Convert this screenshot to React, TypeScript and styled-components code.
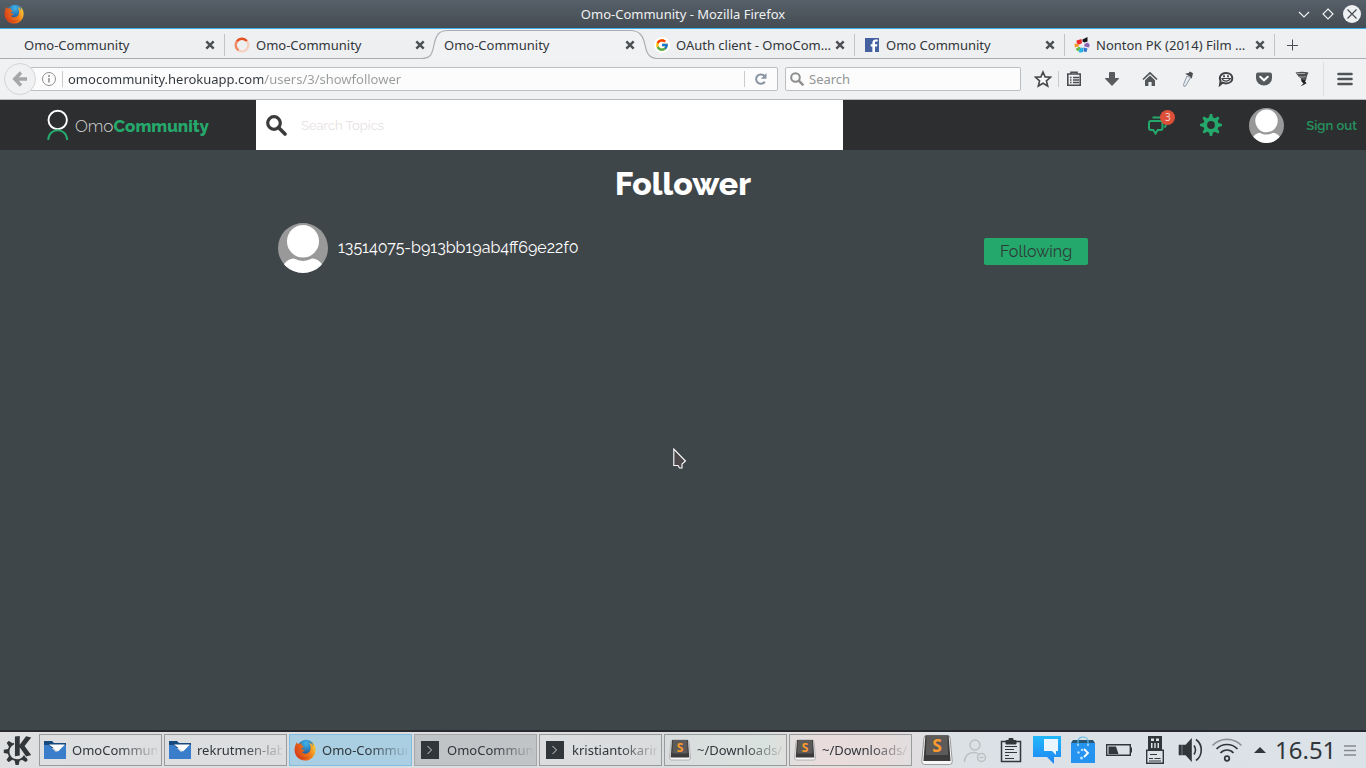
import React from "react";
import styled, { createGlobalStyle, css } from "styled-components";
import { FcGoogle } from "react-icons/fc";
import { SiKde } from "react-icons/si";

const chromeFont = `"Noto Sans", "Open Sans", sans-serif`;
const siteFont = `Raleway, Lato, sans-serif`;
const green = "#25a86b";

const GlobalStyle = createGlobalStyle`
  *, *::before, *::after { box-sizing: border-box; }
  body { margin: 0; background: #3f4649; font-family: ${chromeFont}; font-size: 13px; color: #31363b; }
  button { font: inherit; color: inherit; padding: 0; border: 0; background: none; cursor: pointer; }
  input { font: inherit; color: inherit; padding: 0; border: 0; background: none; outline: 0; min-width: 0; }
  a { text-decoration: none; color: inherit; }
  svg { display: block; flex: none; }
`;

const Desktop = styled.div`
  display: flex;
  flex-direction: column;
  min-height: 100vh;
`;

/* ---------- window title ---------- */
const TitleBar = styled.header`
  display: grid;
  grid-template-columns: 1fr auto 1fr;
  align-items: center;
  height: 29px;
  padding: 0 4px;
  color: #eff0f1;
  background: linear-gradient(#566068, #454c53);
  border-bottom: 1px solid #3daee9;
`;
const WindowControls = styled.div`
  display: flex;
  justify-content: flex-end;
  gap: 4px;
`;
const WindowButton = styled.button`
  display: grid;
  place-items: center;
  width: 20px;
  height: 20px;
`;

/* ---------- tabs ---------- */
const TabStrip = styled.nav`
  display: flex;
  height: 30px;
  padding-left: 14px;
  background: linear-gradient(#eff0f1, #eeeff1);
  border-bottom: 1px solid #a9adb1;
`;
const Tab = styled.div<{ $divider?: boolean }>`
  position: relative;
  display: flex;
  align-items: center;
  gap: 6px;
  flex: 0 1 210px;
  min-width: 0;
  height: 30px;
  padding: 1px 9px 0 10px;
  ${(p) =>
    p.$divider &&
    css`
      &::after {
        content: "";
        position: absolute;
        right: -1px;
        top: 5px;
        width: 1px;
        height: 22px;
        background: #c2c5c8;
      }
    `}
`;
const TabOutline = styled.svg`
  position: absolute;
  left: -12px;
  top: 0;
`;
const TabLink = styled.a`
  position: relative;
  flex: 1;
  overflow: hidden;
  white-space: nowrap;
  text-overflow: ellipsis;
  line-height: 20px;
`;
const TabClose = styled.button`
  position: relative;
  display: grid;
  place-items: center;
  width: 10px;
  height: 16px;
  margin-left: -4px;
`;
const NewTab = styled.button`
  display: grid;
  place-items: center;
  width: 36px;
  padding-top: 3px;
`;

/* ---------- navigation bar ---------- */
const NavBar = styled.div`
  display: flex;
  align-items: center;
  height: 41px;
  padding-left: 4px;
  background: #f0f1f3;
  border-bottom: 1px solid #b9bcbf;
`;
const BackButton = styled.button`
  position: relative;
  display: grid;
  place-items: center;
  flex: none;
  width: 32px;
  height: 32px;
  margin-right: -6px;
  border: 1px solid #d3d5d7;
  border-radius: 50%;
  background: #f0f1f3;
`;
const Field = styled.div<{ $search?: boolean }>`
  display: flex;
  align-items: center;
  flex: ${(p) => (p.$search ? "0 1 236px" : "1 1 0")};
  min-width: 0;
  height: 24px;
  border: 1px solid #bcbfc2;
  border-radius: 2px;
  background: #fcfcfc;
  gap: 5px;
  ${(p) =>
    p.$search
      ? css`
          margin-left: 7px;
          padding-left: 4px;
        `
      : css`
          padding-left: 10px;
        `}
`;
const AddressInput = styled.input`
  flex: 1;
  height: 20px;
  color: transparent;
  background: linear-gradient(to right, #31363b 195px, #989b9d 195px);
  background-clip: text;
  -webkit-background-clip: text;
`;
const SearchInput = styled.input`
  flex: 1;
  height: 20px;
  &::placeholder { color: #939597; opacity: 1; }
`;
const Rule = styled.span<{ $tall?: boolean }>`
  flex: none;
  width: 1px;
  height: ${(p) => (p.$tall ? 34 : 16)}px;
  margin-left: ${(p) => (p.$tall ? 2 : 0)}px;
  background: ${(p) => (p.$tall ? "#dcdee0" : "#c9cccf")};
`;
const ReloadButton = styled.button`
  display: grid;
  place-items: center;
  width: 27px;
  height: 20px;
  padding-right: 5px;
`;
const Tools = styled.div`
  display: flex;
  align-items: center;
  padding-left: 6px;
`;
const ToolButton = styled.button<{ $width?: number }>`
  display: grid;
  place-items: center;
  width: ${(p) => p.$width ?? 38}px;
  height: 30px;
`;
const ListButton = styled(ToolButton)`
  width: 34px;
  padding-right: 4px;
`;

/* ---------- site ---------- */
const SiteHeader = styled.header`
  display: flex;
  height: 50px;
  background: #2d2e30;
  font-family: ${siteFont};
`;
const Brand = styled.a`
  display: flex;
  align-items: center;
  gap: 6px;
  width: 256px;
  padding-left: 47px;
  color: #d4d4d4;
  font-size: 17px;
  line-height: 24px;
`;
const BrandName = styled.span`
  font-weight: 300;
  padding-top: 2px;
  b { font-weight: 800; color: ${green}; }
`;
const TopicSearch = styled.label`
  display: flex;
  align-items: center;
  gap: 14px;
  flex: 0 1 43%;
  padding-left: 10px;
  background: #fff;
`;
const TopicInput = styled.input`
  flex: 1;
  height: 30px;
  color: #3b3b3b;
  &::placeholder { color: #e6dfe1; opacity: 1; }
`;
const Account = styled.div`
  display: flex;
  align-items: center;
  justify-content: flex-end;
  flex: 1;
  padding-right: 9px;
`;
const IconLink = styled.a`
  position: relative;
  margin-right: 32px;
`;
const Badge = styled.span`
  position: absolute;
  right: -7px;
  top: -5px;
  width: 15px;
  height: 15px;
  border-radius: 50%;
  background: #dd4f39;
  color: #f3d5cf;
  font-family: ${chromeFont};
  font-size: 10px;
  line-height: 15px;
  text-align: center;
`;
const AvatarLink = styled.a`
  margin: 0 22px 0 -5px;
`;
const SignOut = styled.a`
  padding-top: 2px;
  color: #25935f;
  font-size: 13px;
  font-weight: 600;
  line-height: 20px;
`;
const Page = styled.main`
  flex: 1;
  width: 100%;
  max-width: 810px;
  margin: 0 auto;
  color: #fff;
  font-family: ${siteFont};
  font-size: 16px;
`;
const PageTitle = styled.h1`
  margin: 14px 0 19px;
  font-size: 32px;
  font-weight: 800;
  line-height: 40px;
  text-align: center;
`;
const FollowerRow = styled.article`
  display: flex;
  align-items: center;
  gap: 10px;
`;
const FollowerName = styled.a`
  flex: 1;
  line-height: 20px;
`;
const FollowButton = styled.button`
  width: 104px;
  height: 27px;
  margin-top: 7px;
  border-radius: 2px;
  background: ${green};
  color: #2d3b38;
`;
const Pointer = styled.svg`
  position: absolute;
  left: 673px;
  top: 448px;
  pointer-events: none;
`;

/* ---------- desktop panel ---------- */
const Panel = styled.footer`
  display: flex;
  align-items: center;
  height: 38px;
  padding-left: 3px;
  border-top: 2px solid #292a30;
  background: linear-gradient(to right, #dedfe0 0%, #dadcdd 48%, #d9e2df 56%, #e9dcdc 60%, #e6dcdc 65%, #dbe1e5 69%, #dce3e8 100%);
`;
const Launcher = styled.button`
  width: 30px;
  margin-right: 6px;
`;
const TaskList = styled.div`
  display: flex;
  gap: 2px;
  flex: 0 1 873px;
  min-width: 0;
`;
const Task = styled.button<{ $tone?: "active" | "dim" }>`
  display: flex;
  align-items: center;
  gap: 6px;
  flex: 1 1 0;
  min-width: 0;
  height: 32px;
  padding: 0 4px;
  border: 1px solid ${(p) => (p.$tone === "active" ? "#80bde0" : p.$tone === "dim" ? "#a5a8aa" : "#999c9e")};
  background: ${(p) => (p.$tone === "active" ? "#aacfe3" : p.$tone === "dim" ? "#c1c4c6" : "transparent")};
  text-align: left;
`;
const TaskLabel = styled.span`
  flex: 1;
  overflow: hidden;
  white-space: nowrap;
  line-height: 20px;
  mask-image: linear-gradient(to right, #000 55%, transparent 105%);
`;
const Tray = styled.div`
  display: flex;
  align-items: center;
  flex: 1;
  justify-content: flex-end;
`;
const TrayButton = styled.button<{ $width?: number }>`
  display: grid;
  place-items: center;
  width: ${(p) => p.$width ?? 36}px;
  height: 36px;
`;
const Clock = styled.time`
  font-size: 24px;
  line-height: 34px;
  width: 59px;
  text-align: center;
`;

/* ---------- drawings ---------- */
const Firefox = ({ size = 20 }: { size?: number }) => (
  <svg width={size} height={size} viewBox="0 0 20 20">
    <defs>
      <radialGradient id="ffGlobe" cx="50%" cy="20%" r="80%">
        <stop offset="0" stopColor="#3fb5ea" />
        <stop offset="1" stopColor="#123a80" />
      </radialGradient>
      <linearGradient id="ffFox" x1="0" y1="0.6" x2="1" y2="0.2">
        <stop offset="0" stopColor="#d9401b" />
        <stop offset="0.6" stopColor="#ee7a1a" />
        <stop offset="1" stopColor="#fbd33a" />
      </linearGradient>
    </defs>
    <circle cx="11" cy="9" r="8.3" fill="url(#ffGlobe)" />
    <path d="M2.5 3 C3 4 3.3 4.4 4.2 4.6 C5.4 4 6.5 4.2 7 4.4 C6.4 5.2 6.6 6 8.8 6.8 C8.8 7.8 7.3 8 6.6 8.8 C7 9.8 8.5 9.6 9.9 10 C9.4 11.6 7.4 11.4 7 11.7 C8.4 14 13 14 14.6 10.6 C15.5 8.4 15 5.4 13.8 3 C16.4 4.4 17 6 17.2 7 C17.4 5 16.8 3.3 15.6 2 C18.6 4 19.8 7.2 19.6 10.4 C19.2 15.8 15 19.6 10 19.6 C4.6 19.6 .5 15.3 .5 10 C.5 7.6 1.3 5 2.5 3Z" fill="url(#ffFox)" />
    <path d="M2 12 C4 17 10 18.2 14.6 15.6 C11 19.4 4 18.6 2 12Z" fill="#c5321a" opacity=".55" />
  </svg>
);
const Cross = () => (
  <svg width="10" height="10" viewBox="0 0 10 10" stroke="#4c5054" strokeWidth="2.4">
    <path d="M1.3 1.3 L8.7 8.7 M8.7 1.3 L1.3 8.7" />
  </svg>
);
const Spinner = () => (
  <svg width="16" height="16" viewBox="0 0 16 16" fill="none" strokeWidth="2.4">
    <circle cx="8" cy="8" r="6.4" stroke="#f7cfc0" />
    <path d="M3 4.200 A6.4 6.4 0 0 0 4.5 13.3" stroke="#ee8a66" />
    <path d="M12.800 4 A6.4 6.4 0 0 0 3 4.2" stroke="#e2511f" />
  </svg>
);
const GoogleMark = () => (
  <svg width="16" height="16" viewBox="0 0 16 16">
    <circle cx="8" cy="8" r="8" fill="#fff" />
    <FcGoogle x="1" y="1" size={14} />
  </svg>
);
const FacebookMark = () => (
  <svg width="16" height="16" viewBox="0 0 16 16">
    <path d="M1 1h14v14H1z" fill="#4460a0" />
    <path d="M13.7 4.6V2.4h-2C9.4 2.4 8.4 3.7 8.4 5.6v1.6H6.7v2.3h1.7V15H11V9.5h2l.4-2.3H11V5.8c0-.8.4-1.2 1.2-1.2z" fill="#fff" />
  </svg>
);
const Pinwheel = () => (
  <svg width="16" height="16" viewBox="0 0 16 16">
    <path d="M2.5 3.500 L7.500 2 L8 6 L5.500 7.500 L2.800 6.500Z" fill="#ec2b2b" />
    <path d="M8.500 2.500 L13.500 0 V4.500 L10.500 5.500 L8.500 4.500Z" fill="#16171a" />
    <path d="M10.300 7 L14 5.500 L15.700 8 L15 10.500 L10.500 9.500Z" fill="#8d63b5" />
    <path d="M9.500 10.500 L13.500 11.500 L12.500 15 L9.500 14.500Z" fill="#3476c8" />
    <path d="M7 10.500 L9 11 L9 15 L5.500 15.700 L4.500 13.500Z" fill="#25b2e8" />
    <path d="M5 9.700 L6.700 10.700 L4 14.500 L1.500 12Z" fill="#66bb46" />
    <path d="M.5 6.500 L5 7.300 L5 9.300 L.8 10.500Z" fill="#f39a2d" />
  </svg>
);
const Gavatar = ({ size }: { size: number }) => {
  const id = `avatar${size}`;
  return (
    <svg width={size} height={size} viewBox="0 0 50 50">
      <clipPath id={id}>
        <circle cx="25" cy="25" r="25" />
      </clipPath>
      <g clipPath={`url(#${id})`}>
        <path d="M0 0h50v50H0z" fill="#999" />
        <path d="M4 44 C7 39 10 36.5 15 35.5 H35 C40 36.5 43 39 46 44 V50 H4Z" fill="#fff" />
        <ellipse cx="25" cy="19" rx="17.5" ry="19" fill="#999" />
        <ellipse cx="25" cy="18.3" rx="16" ry="16.3" fill="#fff" />
      </g>
    </svg>
  );
};
const Folder = () => (
  <svg width="22" height="20" viewBox="0 0 22 20">
    <path d="M0 1h8l2 2h12v5H0z" fill="#16497c" />
    <path d="M0 5h5l7 7 8-7h2v14H0z" fill="#3a7ecb" />
    <path d="M5 4.5h16l-7 7z" fill="#fff" />
  </svg>
);
const Terminal = () => (
  <svg width="22" height="20" viewBox="0 0 22 20">
    <path d="M2 1h18v18H2z" fill="#31363b" />
    <path d="M8.5 6l4 4-4 4" fill="none" stroke="#cfd1d2" />
  </svg>
);
const Sublime = ({ size = 22 }: { size?: number }) => (
  <svg width={size} height={size} viewBox="0 0 22 22">
    <path d="M2 3 Q2 1 4 1 H18 Q20 1 20 3 L21.5 19 Q21.5 21 19.5 21 H2.5 Q.5 21 .5 19Z" fill="#f7f7f7" stroke="#8e8e8e" strokeWidth=".6" />
    <path d="M3 1 H19 L20.3 18.5 H1.7Z" fill="#3b3b3b" />
    <path d="M3.8 1 H18.2 L18.6 14.5 H3.4Z" fill="#5d5b59" />
    <text x="11" y="12.5" fill="#ff9a2e" fontSize="12" fontWeight="700" textAnchor="middle" fontFamily="Noto Sans, sans-serif">S</text>
  </svg>
);

const tabs: { title: string; icon?: React.ReactNode; active?: boolean; divider?: boolean }[] = [
  { title: "Omo-Community", divider: true },
  { title: "Omo-Community", icon: <Spinner /> },
  { title: "Omo-Community", active: true },
  { title: "OAuth client - OmoCommunity", icon: <GoogleMark />, divider: true },
  { title: "Omo Community", icon: <FacebookMark />, divider: true },
  { title: "Nonton PK (2014) Film Movie", icon: <Pinwheel />, divider: true },
];

const tools: { name: string; icon: React.ReactNode }[] = [
  {
    name: "Downloads",
    icon: (
      <svg width="16" height="16" viewBox="0 0 16 16">
        <path d="M5.5 1.5h5v6h4.2L8 14.5 1.3 7.5h4.2z" fill="#595c5f" stroke="#47494c" strokeWidth=".8" />
      </svg>
    ),
  },
  {
    name: "Home",
    icon: (
      <svg width="16" height="16" viewBox="0 0 16 16">
        <path d="M1 8.5 L8 2 15 8.5" fill="none" stroke="#505356" strokeWidth="1.7" />
        <path d="M3 9.2 8 4.6 13 9.2V15H9.6v-4H6.4v4H3z" fill="#55585b" />
      </svg>
    ),
  },
  {
    name: "Eyedropper",
    icon: (
      <svg width="16" height="16" viewBox="0 0 16 16">
        <path d="M7 5l3.500 1.500L6 14.5 4 15.5 3.5 13.5z" fill="#e9ecf0" stroke="#8b98a8" strokeWidth="1" />
        <path d="M5 2.800 L8.500 2 10 .5 13 2.200 12.500 4.200 11.800 7.800 10 5.500z" fill="#4b4d51" />
      </svg>
    ),
  },
  {
    name: "Chat",
    icon: (
      <svg width="16" height="16" viewBox="0 0 16 16" fill="none" stroke="#3f4144">
        <path d="M8 2C12 2 14.3 4.4 14.3 7.2S12 12.4 8 12.4C6.500 12.4 5.5 12.2 4.5 11.7L2 13.8 2.6 10C.6 6 3 2 8 2Z" strokeWidth="2" />
        <path d="M4 7.5c1.5 3.6 6.5 3.6 8.3 0z" strokeWidth="1.2" />
        <path d="M6 4.2v2M10 4.2v2" strokeWidth="1.8" />
      </svg>
    ),
  },
  {
    name: "Pocket",
    icon: (
      <svg width="18" height="16" viewBox="0 0 18 16">
        <path d="M3 1.5h12q2 0 2 2v3.5a8 7.5 0 0 1-16 0V3.5q0-2 2-2z" fill="#56595c" />
        <path d="M5.2 5.7 9 9.3l3.8-3.6" fill="none" stroke="#fff" strokeWidth="2" strokeLinecap="round" />
      </svg>
    ),
  },
  {
    name: "Tornado",
    icon: (
      <svg width="16" height="16" viewBox="0 0 16 16">
        <path d="M1.500 1.500 Q8 0 14.500 1.500 L13 5 L12 9 L8 8.500 L4.500 5.500z" fill="#4e5052" />
        <path d="M3 2.500h8M5.500 5.500c2 1 4 .800 6 0" fill="none" stroke="#b9bbbd" strokeWidth=".8" />
        <path d="M7 8l5 1-1 1.200 1.500 2L9.500 14 6.500 15.200l3-2.800L7.500 10.500z" fill="#222" />
      </svg>
    ),
  },
];

const tasks: { label: string; icon: React.ReactNode; tone?: "active" | "dim" }[] = [
  { label: "OmoCommunity", icon: <Folder /> },
  { label: "rekrutmen-labpro", icon: <Folder /> },
  { label: "Omo-Community", icon: <Firefox size={22} />, tone: "active" },
  { label: "OmoCommunity", icon: <Terminal />, tone: "dim" },
  { label: "kristiantokarim", icon: <Terminal /> },
  { label: "~/Downloads/", icon: <Sublime /> },
  { label: "~/Downloads/", icon: <Sublime /> },
];

const tray: { name: string; icon: React.ReactNode; width?: number }[] = [
  { name: "Sublime Text", width: 40, icon: <Sublime size={32} /> },
  {
    name: "User offline",
    icon: (
      <svg width="24" height="26" viewBox="0 0 24 26" fill="none" stroke="#bcc0c3" strokeWidth="1.5">
        <circle cx="12" cy="8" r="5" />
        <path d="M1.5 25c0-6 4-9.5 9-9.5 2 0 3.5.5 5 1.5" />
        <circle cx="18.5" cy="20.5" r="4" />
        <path d="M16.5 20.5h4" />
      </svg>
    ),
  },
  {
    name: "Clipboard",
    icon: (
      <svg width="22" height="26" viewBox="0 0 22 26" fill="none" stroke="#31363b">
        <path d="M1.5 4.5h19v20h-19z" strokeWidth="1.5" />
        <path d="M6 3.5h3V1.5h4v2h3V7H6z" fill="#31363b" />
        <path d="M5 9.5h12M5 12.5h9M5 15.5h12M5 18.5h4M5 21.5h9" />
      </svg>
    ),
  },
  {
    name: "Messages",
    icon: (
      <svg width="28" height="28" viewBox="0 0 28 28">
        <defs>
          <linearGradient id="msg" x2="0" y2="1">
            <stop stopColor="#21b8fb" />
            <stop offset="1" stopColor="#1f85f2" />
          </linearGradient>
        </defs>
        <path d="M0 0h28v21h-7v7l-7-7H0z" fill="url(#msg)" />
        <path d="M11 3h14v12h-2v4l-4-4h-8z" fill="#eaf5fd" />
      </svg>
    ),
  },
  {
    name: "Software",
    icon: (
      <svg width="24" height="28" viewBox="0 0 24 28">
        <path d="M2 4h20l2 3H0z" fill="#2a5675" />
        <path d="M0 7h24v20H0z" fill="#2494f0" />
        <path d="M7 9V5a5 4 0 0 1 10 0v4" fill="none" stroke="#5fbdf0" strokeWidth="1.2" />
        <path d="M13 13l4 4-4 4" fill="none" stroke="#fff" strokeWidth="1.8" />
        <g fill="#b6e0ff">
          <circle cx="7.5" cy="16.5" r="1.2" />
          <circle cx="11" cy="14" r="1.2" />
          <circle cx="10.5" cy="22" r="1.5" />
          <circle cx="7" cy="9" r="1" />
          <circle cx="17" cy="9" r="1" />
        </g>
      </svg>
    ),
  },
  {
    name: "Battery",
    icon: (
      <svg width="26" height="14" viewBox="0 0 26 14">
        <path d="M.7 1.7h23.6v10.6H.7z" fill="none" stroke="#31363b" strokeWidth="1.4" />
        <path d="M2.5 3.5h7.5l2.5 7.5h-10zM24.5 4.5H26v5h-1.5z" fill="#31363b" />
      </svg>
    ),
  },
  {
    name: "Removable device",
    icon: (
      <svg width="18" height="28" viewBox="0 0 18 28">
        <path d="M2 0h14v14H2z" fill="#31363b" />
        <path d="M5 2.500h3v2.500H5zM10 2.500h3v2.500h-3zM5 7h1.500v5H5zM8.300 7h1.400v5H8.300zM11.500 7H13v5h-1.500z" fill="#dce2e6" />
        <path d="M.7 14.200h16.600v13.100H.7z" fill="#dce2e6" stroke="#31363b" strokeWidth="1.4" />
        <path d="M4 18.500h7M3 22.500h4M8.500 22.500h6M3 25h12" stroke="#31363b" />
      </svg>
    ),
  },
  {
    name: "Volume",
    icon: (
      <svg width="26" height="24" viewBox="0 0 26 24" fill="none" stroke="#31363b" strokeWidth="1.6">
        <path d="M1.5 7.5h1.5v9H1.5zM5 7.5h3L13 2v20l-5-5.5H5z" fill="#31363b" />
        <path d="M16 7.5q3 4.500 0 9M18 1.5c7 5 7 16 0 21" />
      </svg>
    ),
  },
  {
    name: "Wireless network",
    icon: (
      <svg width="32" height="24" viewBox="0 0 32 24" fill="none" stroke="#31363b" strokeWidth="1.7">
        <path d="M1.5 7.5C9-.8 23-.8 30.5 7.5" stroke="#8d9296" />
        <path d="M5.5 11C11 5 21 5 26.5 11M9.5 15c3.5-4 9.500-4 13 0" />
        <circle cx="16" cy="20.5" r="2.3" />
      </svg>
    ),
  },
  {
    name: "Show hidden icons",
    width: 30,
    icon: (
      <svg width="12" height="6" viewBox="0 0 12 6">
        <path d="M0 6 6 0l6 6z" fill="#31363b" />
      </svg>
    ),
  },
];

const gearTeeth = [0, 45, 90, 135, 180, 225, 270, 315];

export default function App() {
  return (
    <Desktop>
      <GlobalStyle />
      <TitleBar>
        <Firefox />
        <span>Omo-Community - Mozilla Firefox</span>
        <WindowControls>
          <WindowButton aria-label="Minimize">
            <svg width="12" height="7" viewBox="0 0 12 7" fill="none" stroke="#eff0f1" strokeWidth="1.2">
              <path d="M1 1l5 5 5-5" />
            </svg>
          </WindowButton>
          <WindowButton aria-label="Maximize">
            <svg width="12" height="12" viewBox="0 0 12 12" fill="none" stroke="#eff0f1" strokeWidth="1.2">
              <path d="M6 1l5 5-5 5-5-5z" />
            </svg>
          </WindowButton>
          <WindowButton aria-label="Close">
            <svg width="18" height="18" viewBox="0 0 18 18">
              <circle cx="9" cy="9" r="9" fill="#eff0f1" />
              <path d="M4.5 4.5l9 9M13.5 4.5l-9 9" stroke="#454c53" strokeWidth="1.2" />
            </svg>
          </WindowButton>
        </WindowControls>
      </TitleBar>

      <TabStrip aria-label="Tabs">
        {tabs.map((tab, i) => (
          <Tab key={i} $divider={tab.divider}>
            {tab.active && (
              <TabOutline width="236" height="30" viewBox="0 0 236 30">
                <path d="M0 29.5 C8 29.5 10 26 12 16 C14 6 17 1.5 26 1.5 H208 C217 1.5 221 6 223 16 C225 26 228 29.5 236 29.5 V30 H0Z" fill="#f1f2f4" />
                <path d="M0 29.5 C8 29.5 10 26 12 16 C14 6 17 1.5 26 1.5 H208 C217 1.5 221 6 223 16 C225 26 228 29.5 236 29.5" fill="none" stroke="#aaaeb2" strokeWidth="1.2" />
              </TabOutline>
            )}
            {tab.icon}
            <TabLink href="#">{tab.title}</TabLink>
            <TabClose aria-label="Close tab">
              <Cross />
            </TabClose>
          </Tab>
        ))}
        <NewTab aria-label="New tab">
          <svg width="12" height="12" viewBox="0 0 12 12" stroke="#4c5054" strokeWidth="1">
            <path d="M6.5 .5v11M1 6.500h11" />
          </svg>
        </NewTab>
      </TabStrip>

      <NavBar>
        <BackButton aria-label="Back">
          <svg width="16" height="16" viewBox="0 0 16 16" fill="none" stroke="#a5a7a9" strokeWidth="3.4">
            <path d="M9 1.5 2.7 8 9 14.5M3 8h12" />
          </svg>
        </BackButton>
        <Field>
          <svg width="16" height="16" viewBox="0 0 16 16" fill="none" stroke="#8f9193">
            <circle cx="8" cy="8" r="6.5" />
            <path d="M8 7v4.5M8 4v2" strokeWidth="1.6" />
          </svg>
          <Rule />
          <AddressInput aria-label="Address" defaultValue="omocommunity.herokuapp.com/users/3/showfollower" />
          <Rule />
          <ReloadButton aria-label="Reload">
            <svg width="14" height="14" viewBox="0 0 14 14">
              <path d="M10.8 9.6A4.7 4.7 0 1 1 10.2 3.8" fill="none" stroke="#8a96a6" strokeWidth="2" />
              <path d="M12.5 1v5.8H6.8z" fill="#8a96a6" />
            </svg>
          </ReloadButton>
        </Field>
        <Field $search>
          <svg width="14" height="14" viewBox="0 0 14 14" fill="none" stroke="#8c8e90" strokeWidth="2">
            <circle cx="5.5" cy="5.5" r="4.3" />
            <path d="M8.7 8.7l4.6 4.6" strokeWidth="2.4" />
          </svg>
          <SearchInput aria-label="Search the web" placeholder="Search" />
        </Field>
        <Tools>
          <ToolButton $width={31} aria-label="Bookmark this page">
            <svg width="18" height="18" viewBox="0 0 18 18">
              <path d="M9 2l2.1 4.900 5.400.4-4.100 3.500 1.300 5.200L9 13.200 4.300 16l1.300-5.200L1.500 7.300l5.400-.4z" fill="#fafafa" stroke="#47494c" strokeWidth="1.6" />
            </svg>
          </ToolButton>
          <Rule />
          <ListButton aria-label="Bookmarks list">
            <svg width="16" height="16" viewBox="0 0 16 16" fill="none" stroke="#4b4e51">
              <path d="M1.8 3h12.4v11.2H1.8z" strokeWidth="1.6" />
              <path d="M5 3V1.300h6V3" strokeWidth="1.6" />
              <path d="M4 6.500h1.500M7 6.500h6M4 9h1.500M7 9h6M4 11.500h1.500M7 11.500h6" strokeWidth="1.4" />
            </svg>
          </ListButton>
          {tools.map((tool) => (
            <ToolButton key={tool.name} aria-label={tool.name}>
              {tool.icon}
            </ToolButton>
          ))}
          <Rule $tall />
          <ToolButton $width={42} aria-label="Menu">
            <svg width="16" height="14" viewBox="0 0 16 14" stroke="#505356" strokeWidth="2.6" strokeLinecap="round">
              <path d="M1.5 2h13M1.5 7h13M1.5 12h13" />
            </svg>
          </ToolButton>
        </Tools>
      </NavBar>

      <SiteHeader>
        <Brand href="#">
          <svg width="22" height="32" viewBox="0 0 22 32" fill="none">
            <circle cx="10.7" cy="11" r="9.2" stroke="#fff" strokeWidth="1.9" />
            <path d="M1.2 31C1.5 18 19.8 18 20.2 31" stroke={green} strokeWidth="1.9" />
          </svg>
          <BrandName>
            Omo<b>Community</b>
          </BrandName>
        </Brand>
        <TopicSearch>
          <svg width="21" height="21" viewBox="0 0 21 21" fill="none" stroke="#3b3b3b">
            <circle cx="8" cy="8" r="6.3" strokeWidth="3.2" />
            <path d="M12.5 12.5l6.5 6.500" strokeWidth="3.6" strokeLinecap="round" />
          </svg>
          <TopicInput aria-label="Search Topics" placeholder="Search Topics" />
        </TopicSearch>
        <Account>
          <IconLink href="#" aria-label="Messages">
            <svg width="20" height="20" viewBox="0 0 20 20" fill="none" stroke={green} strokeWidth="2">
              <path d="M3 6h9.500q2 0 2 2v5q0 2-2 2H9.7L7.500 18.500l-2.200-3.500H3q-2 0-2-2V8q0-2 2-2z" />
              <path d="M4.500 2.500h11q2.500 0 2.500 2.500v4q0 2-1.500 3.500" />
            </svg>
            <Badge>3</Badge>
          </IconLink>
          <IconLink href="#" aria-label="Settings">
            <svg width="22" height="22" viewBox="-11 -11 22 22">
              <circle r="5.8" fill="none" stroke={green} strokeWidth="3.8" />
              {gearTeeth.map((angle) => (
                <path key={angle} d="M-2.2 -7 L-1.1 -11 H1.1 L2.2 -7Z" fill={green} transform={`rotate(${angle})`} />
              ))}
            </svg>
          </IconLink>
          <AvatarLink href="#" aria-label="Profile">
            <Gavatar size={35} />
          </AvatarLink>
          <SignOut href="#">Sign out</SignOut>
        </Account>
      </SiteHeader>

      <Page>
        <PageTitle>Follower</PageTitle>
        <FollowerRow>
          <Gavatar size={50} />
          <FollowerName href="#">13514075-b913bb19ab4ff69e22f0</FollowerName>
          <FollowButton>Following</FollowButton>
        </FollowerRow>
      </Page>

      <Pointer width="14" height="22" viewBox="0 0 14 22">
        <path d="M.8 1v16.5H5l1.5 2.500h2.500v-4l3.500-3z" fill="#4c4749" stroke="#fff" strokeWidth="1.1" />
      </Pointer>

      <Panel>
        <Launcher aria-label="Application launcher">
          <SiKde size={29} />
        </Launcher>
        <TaskList>
          {tasks.map((task, i) => (
            <Task key={i} $tone={task.tone}>
              {task.icon}
              <TaskLabel>{task.label}</TaskLabel>
            </Task>
          ))}
        </TaskList>
        <Tray>
          {tray.map((item) => (
            <TrayButton key={item.name} $width={item.width} aria-label={item.name}>
              {item.icon}
            </TrayButton>
          ))}
          <Clock>16.51</Clock>
          <TrayButton $width={32} aria-label="Panel menu">
            <svg width="12" height="11" viewBox="0 0 12 11" stroke="#85898c" strokeWidth="1.4">
              <path d="M0 1h12M0 5.5h12M0 10h12" />
            </svg>
          </TrayButton>
        </Tray>
      </Panel>
    </Desktop>
  );
}
